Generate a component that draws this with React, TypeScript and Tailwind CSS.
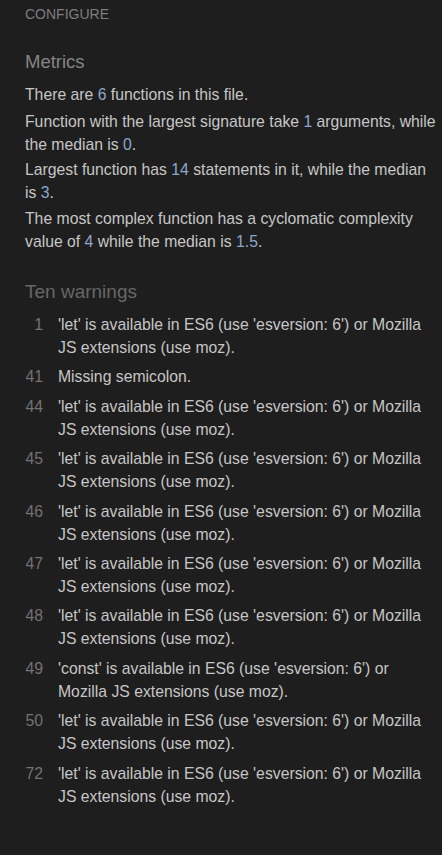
import React from 'react';

const warnings: { line: number; text: string }[] = [
  { line: 1, text: "'let' is available in ES6 (use 'esversion: 6') or Mozilla JS extensions (use moz)." },
  { line: 41, text: 'Missing semicolon.' },
  { line: 44, text: "'let' is available in ES6 (use 'esversion: 6') or Mozilla JS extensions (use moz)." },
  { line: 45, text: "'let' is available in ES6 (use 'esversion: 6') or Mozilla JS extensions (use moz)." },
  { line: 46, text: "'let' is available in ES6 (use 'esversion: 6') or Mozilla JS extensions (use moz)." },
  { line: 47, text: "'let' is available in ES6 (use 'esversion: 6') or Mozilla JS extensions (use moz)." },
  { line: 48, text: "'let' is available in ES6 (use 'esversion: 6') or Mozilla JS extensions (use moz)." },
  { line: 49, text: "'const' is available in ES6 (use 'esversion: 6') or Mozilla JS extensions (use moz)." },
  { line: 50, text: "'let' is available in ES6 (use 'esversion: 6') or Mozilla JS extensions (use moz)." },
  { line: 72, text: "'let' is available in ES6 (use 'esversion: 6') or Mozilla JS extensions (use moz)." },
];

const Num: React.FC<{ children: React.ReactNode }> = ({ children }) => (
  <span className="text-[#8fa6cc]">{children}</span>
);

export default function App() {
  return (
    <div className="min-h-[855px] w-[442px] bg-[#1e1e1e] pl-[25px] pr-[3px] pt-[6px] text-[15.75px] leading-[23px] text-[#c6c6c6] font-['Liberation_Sans',Arial,sans-serif]">
      <div className="text-[14px] leading-[17px] text-[#7d7d7d]">CONFIGURE</div>

      <h2 className="mt-[28px] text-[18.5px] leading-[22px] text-[#858585]">Metrics</h2>
      <div className="mt-[10px] flex flex-col">
        <p>There are <Num>6</Num> functions in this file.</p>
        <p className="mt-[4px]">Function with the largest signature take <Num>1</Num> arguments, while the median is <Num>0</Num>.</p>
        <p className="mt-[2px]">Largest function has <Num>14</Num> statements in it, while the median is <Num>3</Num>.</p>
        <p className="mt-[3px]">The most complex function has a cyclomatic complexity value of <Num>4</Num> while the median is <Num>1.5</Num>.</p>
      </div>

      <h2 className="mt-[28px] text-[19px] leading-[22px] text-[#676767]">Ten warnings</h2>
      <div className="mt-[10px] flex flex-col gap-[6.4px]">
        {warnings.map((w, i) => (
          <div key={i} className="flex">
            <span className="w-[18px] shrink-0 text-right text-[#727272]">{w.line}</span>
            <span className="ml-[15px]">{w.text}</span>
          </div>
        ))}
      </div>
    </div>
  );
}
